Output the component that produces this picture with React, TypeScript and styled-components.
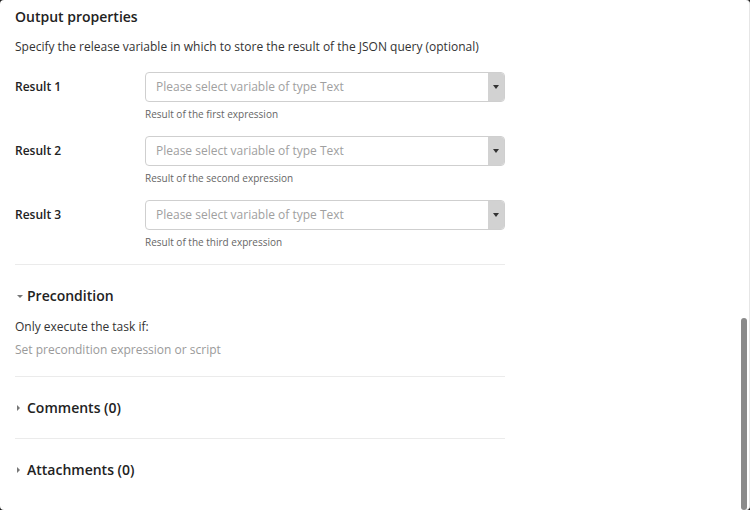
import React from "react";
import styled, { createGlobalStyle } from "styled-components";

const Global = createGlobalStyle`
  html, body { margin: 0; padding: 0; background: #1e1e1e; }
  body { font-family: "Open Sans", "Liberation Sans", sans-serif; }
  * { box-sizing: border-box; }
`;

const Window = styled.div`
  position: relative;
  width: 750px;
  height: 510px;
  background: #ffffff;
  border-radius: 4px;
  overflow: hidden;
  border-right: 1px solid #e6e6e6;
`;

const Content = styled.div`
  width: 490px;
  margin-left: 15px;
  padding-top: 6px;
  color: #333;
`;

const SectionTitle = styled.h2`
  margin: 0;
  font-size: 14px;
  font-weight: 600;
  line-height: 22px;
  color: #222;
  display: flex;
  align-items: center;
`;

const Text = styled.p<{ $muted?: boolean; $top?: number }>`
  margin: ${(p) => p.$top ?? 0}px 0 0;
  font-size: 12px;
  line-height: 18px;
  color: ${(p) => (p.$muted ? "#9a9a9a" : "#333")};
`;

const Fields = styled.div`
  display: flex;
  flex-direction: column;
  gap: 15px;
  margin-top: 16px;
`;

const Row = styled.div`
  display: grid;
  grid-template-columns: 130px 1fr;
  align-items: start;
`;

const Label = styled.label`
  font-size: 12px;
  font-weight: 600;
  color: #222;
  line-height: 30px;
`;

const Select = styled.div`
  display: flex;
  height: 30px;
  border: 1px solid #cfcfcf;
  border-radius: 4px;
  overflow: hidden;
`;

const Placeholder = styled.div`
  flex: 1;
  padding-left: 10px;
  font-size: 12px;
  line-height: 28px;
  color: #a0a0a0;
`;

const ArrowBox = styled.div`
  width: 16px;
  background: #d2d2d2;
  display: flex;
  align-items: center;
  justify-content: center;
`;

const Help = styled.div`
  font-size: 10px;
  color: #666;
  margin-top: 5px;
  line-height: 14px;
`;

const Divider = styled.hr`
  border: 0;
  border-top: 1px solid #ebebeb;
  margin: 0;
`;

const Section = styled.div<{ $top: number; $bottom: number }>`
  padding: ${(p) => p.$top}px 0 ${(p) => p.$bottom}px;
`;

const Caret = styled.span<{ $open?: boolean }>`
  display: inline-block;
  width: 0;
  height: 0;
  margin: 0 4px 0 2px;
  ${(p) =>
    p.$open
      ? `border-left: 3px solid transparent; border-right: 3px solid transparent; border-top: 3px solid #777;`
      : `border-top: 3px solid transparent; border-bottom: 3px solid transparent; border-left: 3px solid #777; margin-right: 7px;`}
`;

const Scrollbar = styled.div`
  position: absolute;
  right: 2px;
  top: 318px;
  width: 6px;
  height: 192px;
  border-radius: 3px;
  background: #8a8a8a;
`;

const fields = [
  { label: "Result 1", help: "Result of the first expression" },
  { label: "Result 2", help: "Result of the second expression" },
  { label: "Result 3", help: "Result of the third expression" },
];

export default function App() {
  return (
    <>
      <Global />
      <Window>
        <Content>
          <SectionTitle>Output properties</SectionTitle>
          <Text $top={10}>Specify the release variable in which to store the result of the JSON query (optional)</Text>
          <Fields>
            {fields.map((f) => (
              <Row key={f.label}>
                <Label>{f.label}</Label>
                <div>
                  <Select>
                    <Placeholder>Please select variable of type Text</Placeholder>
                    <ArrowBox>
                      <svg width="6" height="4" viewBox="0 0 6 4">
                        <path d="M0 0H6L3 4Z" fill="#333" />
                      </svg>
                    </ArrowBox>
                  </Select>
                  <Help>{f.help}</Help>
                </div>
              </Row>
            ))}
          </Fields>
          <Section $top={15} $bottom={0} />
          <Divider />
          <Section $top={20} $bottom={17}>
            <SectionTitle>
              <Caret $open />
              Precondition
            </SectionTitle>
            <Text $top={11}>Only execute the task if:</Text>
            <Text $muted $top={5}>Set precondition expression or script</Text>
          </Section>
          <Divider />
          <Section $top={20} $bottom={19}>
            <SectionTitle>
              <Caret />
              Comments (0)
            </SectionTitle>
          </Section>
          <Divider />
          <Section $top={20} $bottom={20}>
            <SectionTitle>
              <Caret />
              Attachments (0)
            </SectionTitle>
          </Section>
        </Content>
        <Scrollbar />
      </Window>
    </>
  );
}
